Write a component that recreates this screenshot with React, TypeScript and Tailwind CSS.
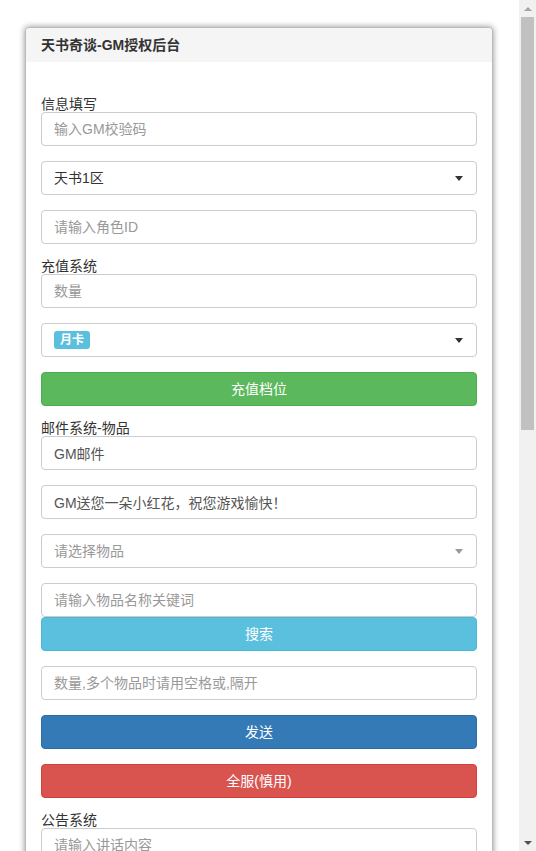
import React from "react";

const font = { fontFamily: '"Liberation Sans", "Noto Sans CJK SC", sans-serif' };

const Field: React.FC<{ placeholder?: string; value?: string; last?: boolean }> = ({ placeholder, value, last }) => (
  <input
    className={`block w-full h-[34px] px-3 text-sm text-[#555] placeholder:text-[#999] bg-white border border-[#ccc] rounded outline-none ${last ? "" : "mb-[15px]"}`}
    placeholder={placeholder}
    defaultValue={value}
  />
);

const Caret: React.FC<{ light?: boolean }> = ({ light }) => (
  <span
    className={`ml-auto w-0 h-0 border-l-4 border-r-4 border-t-[5px] border-l-transparent border-r-transparent ${light ? "border-t-[#999]" : "border-t-[#333]"}`}
  />
);

const Select: React.FC<{ children: React.ReactNode; light?: boolean }> = ({ children, light }) => (
  <div className="flex items-center w-full h-[34px] pl-3 pr-[13px] mb-[15px] text-sm bg-white border border-[#ccc] rounded">
    {children}
    <Caret light={light} />
  </div>
);

const Label: React.FC<{ children: React.ReactNode }> = ({ children }) => (
  <div className="text-sm leading-[15px] h-[15px] text-[#333]">{children}</div>
);

const Btn: React.FC<{ children: React.ReactNode; cls: string; last?: boolean }> = ({ children, cls, last }) => (
  <button className={`block w-full h-[34px] text-sm text-white border rounded ${cls} ${last ? "" : "mb-[15px]"}`}>
    {children}
  </button>
);

// classic page scrollbar drawn on the right edge
const ScrollBar: React.FC = () => (
  <div className="w-[17px] shrink-0 h-full flex flex-col bg-[#f1f1f1]">
    <div className="h-[17px] flex items-center justify-center">
      <span className="w-0 h-0 border-l-4 border-r-4 border-b-4 border-l-transparent border-r-transparent border-b-[#a3a3a3]" />
    </div>
    <div className="flex-1 px-[2px]">
      <div className="h-[413px] bg-[#c1c1c1]" />
    </div>
    <div className="h-[17px] flex items-center justify-center">
      <span className="w-0 h-0 border-l-4 border-r-4 border-t-4 border-l-transparent border-r-transparent border-t-[#505050]" />
    </div>
  </div>
);

export default function App() {
  return (
    <div className="h-[851px] flex overflow-hidden bg-white" style={font}>
      <div className="flex-1 min-w-0 overflow-hidden pt-[27px]">
        <div className="ml-[25px] w-[468px] border border-[#bbb] rounded bg-white shadow-[0_0_6px_rgba(0,0,0,0.45)]">
          <div className="h-[34px] flex items-center px-[15px] bg-[#f5f5f5] rounded-t text-sm font-bold text-[#333]">
            天书奇谈-GM授权后台
          </div>
          <div className="px-[15px] pt-[35px] pb-[15px]">
            <Label>信息填写</Label>
            <Field placeholder="输入GM校验码" />
            <Select>
              <span className="text-[#333]">天书1区</span>
            </Select>
            <Field placeholder="请输入角色ID" />

            <Label>充值系统</Label>
            <Field placeholder="数量" />
            <Select>
              <span className="h-[18px] w-9 flex items-center justify-center rounded-[3px] bg-[#5bc0de] text-white text-xs font-bold">
                月卡
              </span>
            </Select>
            <Btn cls="bg-[#5cb85c] border-[#4cae4c]">充值档位</Btn>

            <Label>邮件系统-物品</Label>
            <Field value="GM邮件" />
            <Field value="GM送您一朵小红花，祝您游戏愉快！" />
            <Select light>
              <span className="text-[#999]">请选择物品</span>
            </Select>
            <Field placeholder="请输入物品名称关键词" last />
            <Btn cls="bg-[#5bc0de] border-[#46b8da]">搜索</Btn>
            <Field placeholder="数量,多个物品时请用空格或,隔开" />
            <Btn cls="bg-[#337ab7] border-[#2e6da4]">发送</Btn>
            <Btn cls="bg-[#d9534f] border-[#d43f3a]">全服(慎用)</Btn>

            <Label>公告系统</Label>
            <Field placeholder="请输入讲话内容" />
            <Btn cls="bg-[#337ab7] border-[#2e6da4]" last>
              发送公告
            </Btn>
          </div>
        </div>
      </div>
      <ScrollBar />
    </div>
  );
}
